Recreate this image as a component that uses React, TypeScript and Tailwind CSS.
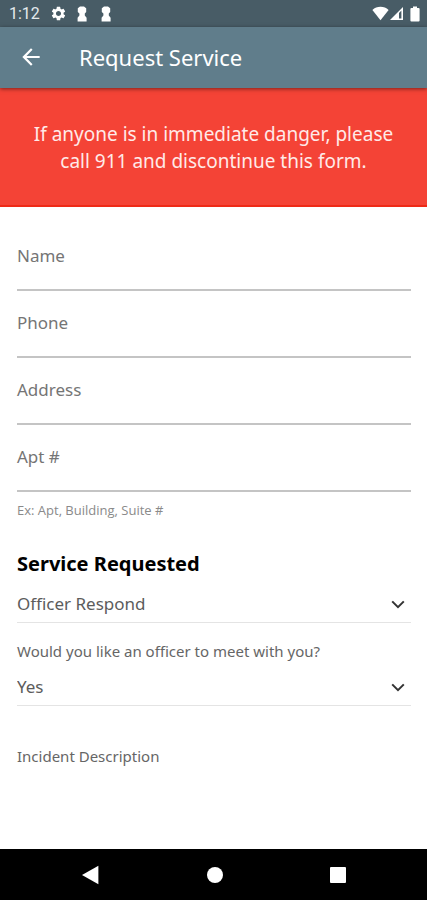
import { FC, useState } from "react";
import { MdArrowBack, MdSettings } from "react-icons/md";

type TextFieldProps = {
  id: string;
  label: string;
  type?: string;
  hint?: string;
};

type SelectFieldProps = {
  id: string;
  label: string;
  options: string[];
};

const KeyholeIcon: FC = () => (
  <svg viewBox="0 0 12 16" className="h-4 w-3" fill="currentColor" aria-hidden="true">
    <path d="M4 0.5h4l2.2 1.8v3.6L8.8 7.4v2.2l1.8 2.2v3.7H1.6v-3.7l1.8-2.2V7.4L1.8 5.9V2.3z" />
  </svg>
);

const StatusBar: FC = () => (
  <div className="flex h-[27px] items-center justify-between bg-[#485c66] pl-[9px] pr-[7px] text-white">
    <div className="flex items-center">
      <span className="w-[41px] font-[Roboto] text-base leading-6 text-[#e4eaed]">1:12</span>
      <MdSettings size={17} aria-hidden="true" />
      <span className="ml-[9px] flex gap-3">
        <KeyholeIcon />
        <KeyholeIcon />
      </span>
    </div>
    <div className="flex items-center" aria-hidden="true">
      {/* wifi */}
      <svg viewBox="0 0 17 15" className="h-[15px] w-[17px]" fill="currentColor">
        <path d="M0.4 3.9C2.6 1.9 5.4 0.8 8.5 0.8s5.9 1.1 8.1 3.1L8.5 14.2z" />
      </svg>
      {/* cell signal */}
      <svg viewBox="0 0 15 15" className="mr-px h-[15px] w-[15px]">
        <path d="M1 14L14 1v13z" fill="#ffffff" />
        <path d="M10 7L12.4 4.6v8H10z" fill="#485c66" />
      </svg>
      {/* battery */}
      <svg viewBox="0 0 10 16" className="ml-[5px] h-4 w-[10px]" fill="currentColor">
        <path d="M3 0.5h4v1.6h1.6a1 1 0 0 1 1 1v11.4a1 1 0 0 1-1 1H1.4a1 1 0 0 1-1-1V3.1a1 1 0 0 1 1-1H3z" />
      </svg>
    </div>
  </div>
);

const TextField: FC<TextFieldProps> = ({ id, label, type = "text", hint }) => (
  <div className="flex flex-col">
    <label htmlFor={id} className="text-[17px] leading-6 text-[#757575]">{label}</label>
    <input
      id={id}
      type={type}
      aria-describedby={hint ? id + "-hint" : undefined}
      className="h-[23px] w-full border-b-2 border-[#c4c4c4] text-[17px] outline-none"
    />
    {hint && (
      <p id={id + "-hint"} className="pt-2 font-['Open_Sans',sans-serif] text-[13px] leading-5 text-[#8a8a8a]">
        {hint}
      </p>
    )}
  </div>
);

const SelectField: FC<SelectFieldProps> = ({ id, label, options }) => {
  const [value, setValue] = useState(options[0]);

  return (
    <div className="grid items-center border-b border-[#e4e4e4]">
      <select
        id={id}
        aria-label={label}
        value={value}
        onChange={(e) => setValue(e.target.value)}
        className="col-start-1 row-start-1 h-9 w-full appearance-none bg-transparent text-[17px] text-[#5c5c5c] outline-none"
      >
        {options.map((option) => <option key={option}>{option}</option>)}
      </select>
      <svg
        viewBox="0 0 14 9"
        className="pointer-events-none col-start-1 row-start-1 mr-[6px] h-[9px] w-[14px] justify-self-end"
        fill="none"
        stroke="#333333"
        strokeWidth="2"
        aria-hidden="true"
      >
        <path d="M1.2 1.4L7 7.2l5.8-5.8" />
      </svg>
    </div>
  );
};

const NavBar: FC = () => (
  <nav className="flex h-[51px] items-center justify-around bg-black px-7 text-white">
    <button type="button" aria-label="Back" className="p-2">
      <svg viewBox="0 0 18 20" className="h-5 w-[18px]" fill="currentColor">
        <path d="M0 10L16.4 0.8v18.4z" />
      </svg>
    </button>
    <button type="button" aria-label="Home" className="p-2">
      <span className="block size-4 rounded-full bg-white" />
    </button>
    <button type="button" aria-label="Overview" className="p-2">
      <span className="block size-4 rounded-[1px] bg-white" />
    </button>
  </nav>
);

export default function App() {
  return (
    <div className="flex min-h-screen flex-col bg-white font-['Noto_Sans',sans-serif]">
      <StatusBar />
      <header className="z-10 flex h-[61px] items-center bg-[#607d8b] pl-[18px] text-white shadow-[0_1px_4px_rgba(0,0,0,0.5)]">
        <button type="button" aria-label="Go back" className="mr-[35px] pb-[2px]">
          <MdArrowBack size={26} />
        </button>
        <h1 className="pb-[2px] text-[22px] leading-8">Request Service</h1>
      </header>
      <p role="alert" className="border-b-2 border-[#ee2a17] bg-[#f44336] px-5 pt-[33px] pb-[30px] text-center text-[19px] leading-[27px] text-[#ffeae8]">
        If anyone is in immediate danger, please call 911 and discontinue this form.
      </p>
      <form className="flex grow flex-col pt-[37px] pr-4 pl-[17px]">
        <div className="flex flex-col gap-5">
          <TextField id="name" label="Name" />
          <TextField id="phone" label="Phone" type="tel" />
          <TextField id="address" label="Address" />
          <TextField id="apt" label="Apt #" hint="Ex: Apt, Building, Suite #" />
        </div>
        <h2 className="mt-8 text-xl leading-6 font-bold text-black">Service Requested</h2>
        <div className="mt-[10px]">
          <SelectField id="service" label="Service Requested" options={["Officer Respond", "Phone Call"]} />
        </div>
        <label htmlFor="meet" className="mt-4 text-[15px] leading-6 text-[#666666]">
          Would you like an officer to meet with you?
        </label>
        <div className="mt-[6px]">
          <SelectField id="meet" label="Would you like an officer to meet with you?" options={["Yes", "No"]} />
        </div>
        <label htmlFor="incident" className="mt-[38px] text-[15px] leading-6 text-[#666666]">Incident Description</label>
        <textarea id="incident" className="w-full grow resize-none outline-none" />
      </form>
      <NavBar />
    </div>
  );
}
